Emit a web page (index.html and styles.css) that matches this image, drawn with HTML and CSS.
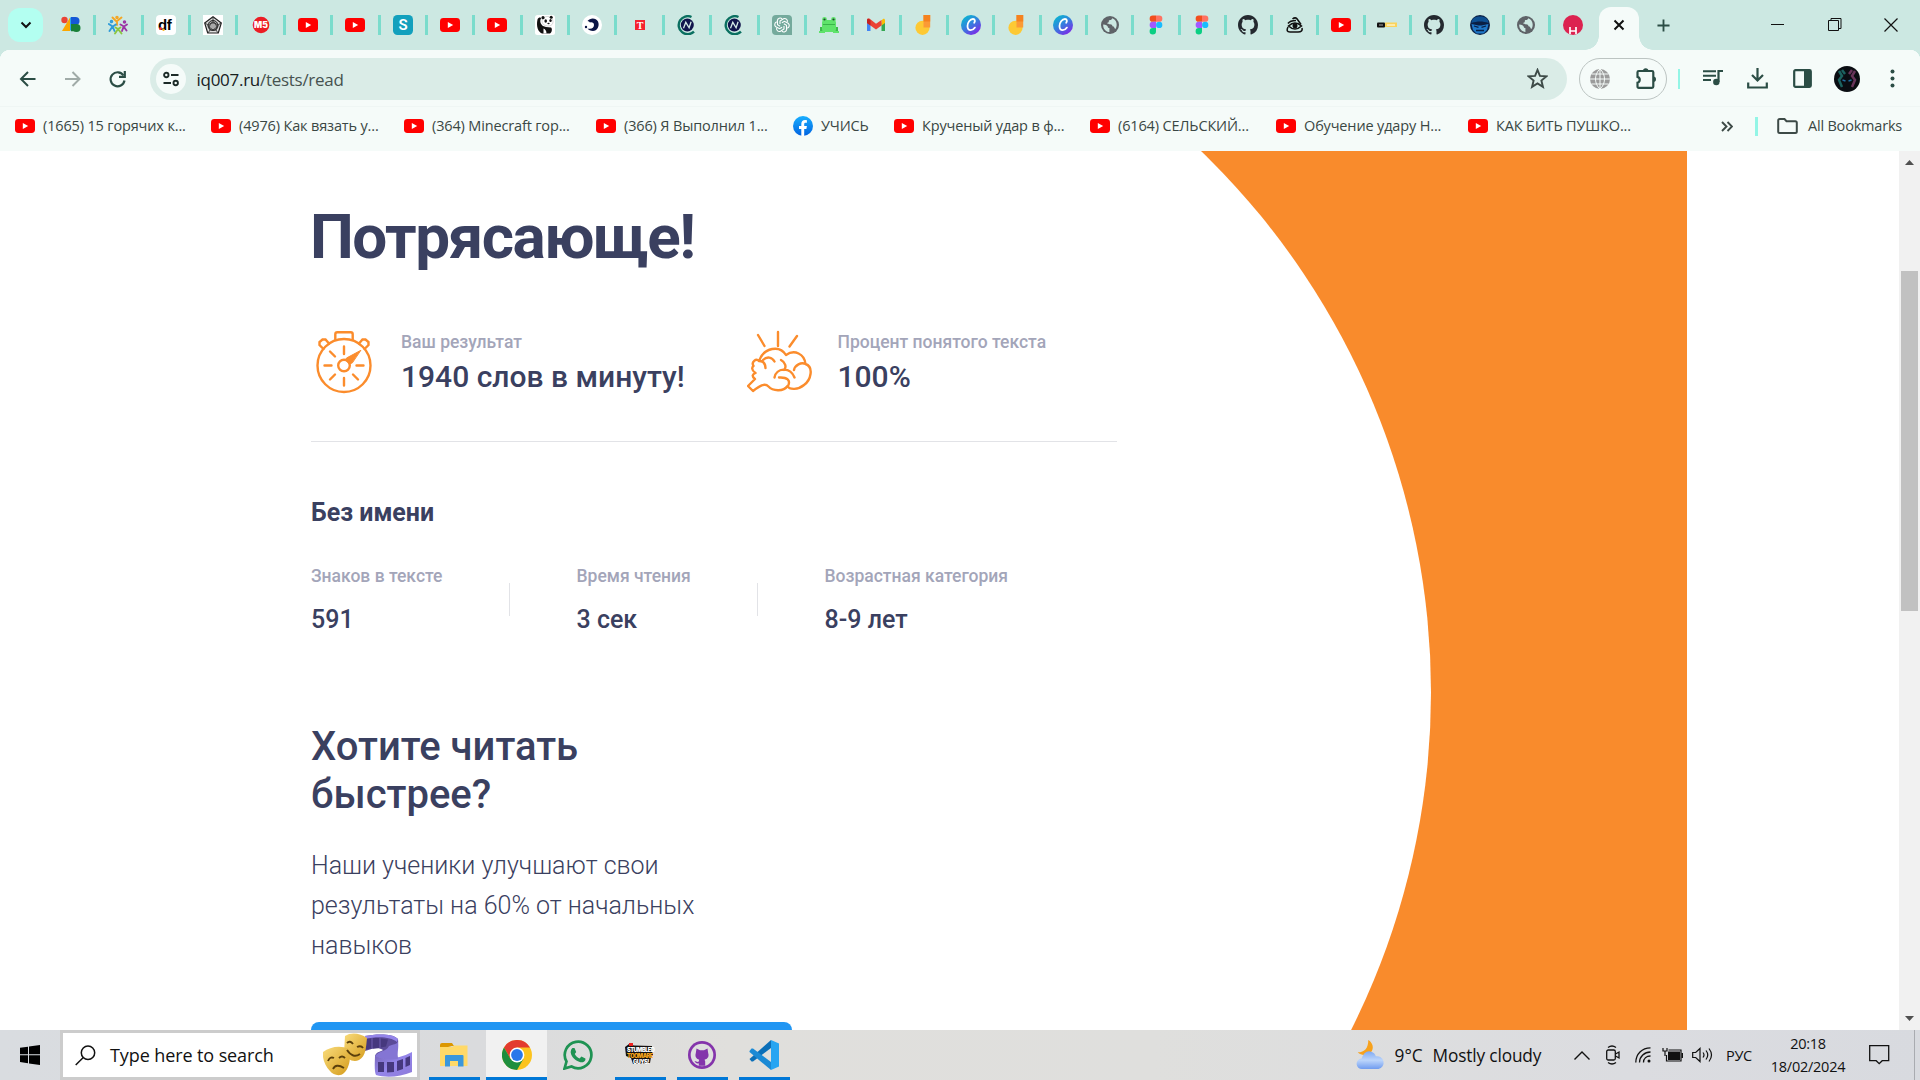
FILE: index.html
```
<!DOCTYPE html>
<html lang="ru">
<head>
<meta charset="utf-8">
<title>iq007.ru/tests/read</title>
<link rel="stylesheet" href="styles.css">
</head>
<body>
<svg class="defs" aria-hidden="true">
  <defs>
    <linearGradient id="canvaG" x1="0" y1="0" x2=".7" y2="1"><stop offset="0" stop-color="#00c4cc"/><stop offset=".5" stop-color="#2f86dd"/><stop offset="1" stop-color="#7d2ae8"/></linearGradient>
    <linearGradient id="gold" x1="0" y1="0" x2="1" y2="1"><stop offset="0" stop-color="#f9dc7c"/><stop offset="1" stop-color="#d59c1c"/></linearGradient>
    <linearGradient id="film" x1="0" y1="0" x2="1" y2="1"><stop offset="0" stop-color="#7463b4"/><stop offset=".5" stop-color="#9485ea"/><stop offset="1" stop-color="#8d7ad8"/></linearGradient>
    <linearGradient id="cloudG" x1="0" y1="0" x2="0" y2="1"><stop offset="0" stop-color="#7fa9f2"/><stop offset=".5" stop-color="#bcd5fb"/><stop offset="1" stop-color="#6f9bef"/></linearGradient>
    <linearGradient id="fbG" x1="0" y1="0" x2="0" y2="1"><stop offset="0" stop-color="#19afff"/><stop offset="1" stop-color="#0062e0"/></linearGradient>
    <symbol id="yt" viewBox="0 0 20 20"><rect y="3" width="20" height="14" rx="3.4" fill="#f00"/><path d="M7.8 7v6l5.400-3z" fill="#fff"/></symbol>
    <symbol id="globe" viewBox="0 0 20 20"><circle cx="10" cy="10" r="9" fill="#5f6368"/><path d="M3.200 9.400c2.700.3 4.300.9 4.600 2.300.2 1 .6 1.300 1.600 1.400v3.900c-3.400-.2-6.600-3.500-6.200-7.600zM12.200 3.300c-.3 1.200-.9 1.700-2.200 1.800-1.100.1-1.300.6-1.200 1.600-.1.900-1 1-1.600 1.100.3 1.300 1.500 1.500 2.600 1.400 1.600-.1 2.600.6 2.700 2 1.300.1 2 .7 1.800 1.900l1.200.9c2.400-3.700 1.200-9.200-3.300-10.700z" fill="#cce8e2"/></symbol>
    <symbol id="figma" viewBox="0 0 20 20"><path d="M6.800.5H10v6.300H6.800a3.150 3.150 0 0 1 0-6.300z" fill="#f24e1e"/><path d="M10 .5h3.200a3.150 3.150 0 0 1 0 6.300H10z" fill="#ff7262"/><path d="M6.800 6.800H10v6.300H6.800a3.150 3.150 0 0 1 0-6.300z" fill="#a259ff"/><circle cx="13.200" cy="9.950" r="3.150" fill="#1abcfe"/><path d="M6.800 13.100H10v3.200a3.200 3.200 0 1 1-3.200-3.200z" fill="#0acf83"/></symbol>
    <symbol id="github" viewBox="0 0 16 16"><path fill="currentColor" d="M8 0C3.580 0 0 3.580 0 8c0 3.540 2.290 6.530 5.470 7.590.4.070.55-.17.55-.38 0-.19-.01-.82-.01-1.490-2.010.37-2.530-.49-2.690-.94-.09-.23-.48-.94-.82-1.130-.28-.15-.68-.52-.01-.53.63-.01 1.080.58 1.230.82.720 1.210 1.870.87 2.330.66.070-.52.28-.87.510-1.070-1.780-.2-3.640-.89-3.640-3.950 0-.87.310-1.590.82-2.150-.08-.2-.36-1.020.08-2.120 0 0 .67-.21 2.200.82.64-.18 1.320-.27 2-.27s1.360.09 2 .27c1.530-1.040 2.200-.82 2.200-.82.44 1.100.16 1.920.08 2.120.51.56.82 1.270.82 2.150 0 3.070-1.870 3.750-3.650 3.950.29.25.54.730.54 1.480 0 1.070-.01 1.930-.01 2.200 0 .21.15.46.55.38A8.010 8.010 0 0 0 16 8c0-4.420-3.580-8-8-8z"/></symbol>
    <symbol id="jam" viewBox="0 0 20 20"><circle cx="8.500" cy="12.800" r="7.100" fill="#fdc934"/><path d="M9.500 0h6.700v12.500H9.500z" fill="#fb9a36"/><path d="M9.500 0h6.700v6.500H9.500z" fill="#f5821f"/></symbol>
    <symbol id="canva" viewBox="0 0 20 20"><circle cx="10" cy="10" r="10" fill="url(#canvaG)"/><path d="M13.200 7.800c1.200-1.700.8-3.800-1.200-3.800-3 0-5.500 3.500-5.500 7 0 2.600 1.300 4.200 3.200 4.200 1.800 0 3.200-1 4.200-2.600" fill="none" stroke="#fff" stroke-width="1.800" stroke-linecap="round"/></symbol>
    <symbol id="cn" viewBox="0 0 20 20"><path d="M14.500 2A9 9 0 1 0 17 16.600" fill="none" stroke="#0a6f60" stroke-width="2.400"/><circle cx="10.300" cy="10" r="6.500" fill="#11144c"/><path d="M6.500 13.300l2.300-6 3.300 5.500 2-6" fill="none" stroke="#d5eae7" stroke-width="1.300"/></symbol>
  </defs>
</svg>
<div class="screen">
  <header class="tabstrip">
    <button class="tab-search"><svg width="12" height="8" viewBox="0 0 12 8"><path d="M1.500 1.500L6 6l4.500-4.500" fill="none" stroke="#111" stroke-width="2"/></svg></button>
    <div class="tabs">
      <div class="tab"><svg viewBox="0 0 20 20"><circle cx="3.500" cy="5" r="3.200" fill="#ea4335"/><path d="M1 16L9 2.500V16z" fill="#fba700"/><path d="M10 2h4.500a4 4 0 0 1 0 8H10z" fill="#1558d6"/><path d="M10 9h4a3.600 3.600 0 0 1 0 7.200h-4z" fill="#188038"/><circle cx="15.500" cy="13" r="4" fill="#188038"/><path d="M10 2v14l-1-1V3z" fill="#2aa3ef"/></svg></div>
      <div class="tab"><svg viewBox="0 0 20 20" fill="none" stroke-width="1.900" stroke-linecap="round"><g stroke="#f5a623"><circle cx="9" cy="2.500" r=".8"/><path d="M4.500 2.500l4 4 5-4M9 7v3"/></g><g stroke="#2f9bd8"><circle cx="3.500" cy="6.500" r=".8"/><path d="M.8 9l4 2.500 3-2M4.500 11.500l-3 4.500M5 12.500l1.500 3.500"/></g><g stroke="#9b35a5"><circle cx="16.500" cy="7" r=".8"/><path d="M12.500 9.500l3.500 2 3-2M15.500 12l-1.500 4M16 12l2.500 3.500"/></g><path d="M7.500 12.500L10 14l2.500-1.500M10 14l-3 4.500M10 14l3.500 4.500" stroke="#8cc63f"/></svg></div>
      <div class="tab"><svg viewBox="0 0 20 20"><rect width="20" height="20" rx="4" fill="#fff"/><text x="2" y="14.500" class="fav-df">df</text><circle cx="4.500" cy="13.500" r="1.500" fill="#e33"/><circle cx="7.500" cy="14.700" r="1.200" fill="#f6b21b"/></svg></div>
      <div class="tab"><svg viewBox="0 0 20 20"><path fill="#fff" d="M0 0h20v20H0z"/><path d="M10 1.800l8.300 6.200-3 10H4.700l-3-10z" fill="#ddd" stroke="#222" stroke-width="1.200"/><circle cx="10" cy="10.500" r="5" fill="#aaa" stroke="#222"/><path d="M10 2v5l5 3 3-2M15 10l-2 5 2 3M13 15H7l-2 3M7 15l-2-5-3-2M5 10l5-3M8 8h4l2 4-4 3-4-3z" fill="none" stroke="#333" stroke-width=".9"/></svg></div>
      <div class="tab"><svg viewBox="0 0 20 20"><circle cx="10" cy="10" r="8.300" fill="#ec1c24"/><text x="10" y="13" class="fav-m5">M5</text></svg></div>
      <div class="tab"><svg><use href="#yt"/></svg></div>
      <div class="tab"><svg><use href="#yt"/></svg></div>
      <div class="tab"><svg viewBox="0 0 20 20"><rect width="20" height="20" rx="4.500" fill="#12a0bd"/><text x="10" y="15.300" class="fav-s">S</text></svg></div>
      <div class="tab"><svg><use href="#yt"/></svg></div>
      <div class="tab"><svg><use href="#yt"/></svg></div>
      <div class="tab"><svg viewBox="0 0 20 20"><rect width="20" height="20" rx="2.500" fill="#fff"/><path d="M2.500 4.500C3.500 2 6 2 6 3.500 4.500 6 5.500 9 8 11l3 1 5 .5c1.500 1 1 5-1 6H7C3 17 1 11 2.500 4.500z" fill="#111"/><path d="M7 6c0-3 3-4.500 5.500-4.500S18 3 18 6.500 15.500 11 12.500 11 7 9 7 6z" fill="#fff" stroke="#999" stroke-width=".4"/><circle cx="8" cy="2.700" r="1.600" fill="#111"/><circle cx="16.200" cy="2.200" r="1.500" fill="#111"/><ellipse cx="10.700" cy="6" rx="1.300" ry="1.700" fill="#111"/><ellipse cx="15.500" cy="5.500" rx="1.200" ry="1.600" fill="#111"/><ellipse cx="13.500" cy="8.500" rx="1.200" ry=".8" fill="#111"/><path d="M8.500 13.500c2 1 3 2.500 3 5h-3z" fill="#fff"/></svg></div>
      <div class="tab"><svg viewBox="0 0 20 20"><circle cx="10" cy="10" r="10" fill="#fff"/><path d="M5.500 6C8 2.500 14 2.500 16 6.500c2 4.500-1 9.500-5 9.500-2.500 0-4.500-1-5.500-2.500 4 1 6.500-.5 6.500-3.500 0-2-1.500-3-4-2.500l-1-1z" fill="#0b1545"/><circle cx="4" cy="12" r="1.200" fill="#0b1545"/></svg></div>
      <div class="tab"><svg viewBox="0 0 20 20"><path fill="#f5232e" d="M5 5h10v10H5z"/><text x="10" y="13.500" class="fav-t">T</text></svg></div>
      <div class="tab"><svg><use href="#cn"/></svg></div>
      <div class="tab"><svg><use href="#cn"/></svg></div>
      <div class="tab"><svg viewBox="0 0 20 20"><path d="M4 0h12a4 4 0 0 1 4 4v16H4a4 4 0 0 1-4-4V4a4 4 0 0 1 4-4z" fill="#74aa9c"/><g fill="none" stroke="#fff" stroke-width="1.100"><path d="M8 9V6l3.500-2.200c2-1 4.500 1 3.800 3.200"/><path d="M8 9V6l3.500-2.200c2-1 4.500 1 3.800 3.200" transform="rotate(60 10 10)"/><path d="M8 9V6l3.500-2.200c2-1 4.500 1 3.800 3.200" transform="rotate(120 10 10)"/><path d="M8 9V6l3.500-2.200c2-1 4.500 1 3.800 3.200" transform="rotate(180 10 10)"/><path d="M8 9V6l3.500-2.200c2-1 4.500 1 3.800 3.200" transform="rotate(240 10 10)"/><path d="M8 9V6l3.500-2.200c2-1 4.500 1 3.800 3.200" transform="rotate(300 10 10)"/></g></svg></div>
      <div class="tab"><svg viewBox="0 0 20 20"><path d="M1 12h4v5H1zM15 12h4v5h-4z" fill="#3dbb4c"/><rect x="3" y="5" width="14" height="12" rx="3" fill="#5fe36b"/><path d="M0 16h6v2H0zM14 16h6v2h-6z" fill="#5fe36b"/><path d="M4 9.500h12" stroke="#38b649"/><circle cx="5.500" cy="4.500" r="2.400" fill="#5fe36b"/><circle cx="14.500" cy="4.500" r="2.400" fill="#5fe36b"/><circle cx="5.500" cy="4.500" r="1.100" fill="#243"/><circle cx="14.500" cy="4.500" r="1.100" fill="#243"/></svg></div>
      <div class="tab"><svg viewBox="0 0 20 20"><path d="M1 5v11h3.500V8z" fill="#4285f4"/><path d="M19 5v11h-3.500V8z" fill="#34a853"/><path d="M15.500 5.500L17 4c1-.7 2 0 2 1.200V8l-3.500 2.600z" fill="#fbbc04"/><path d="M1 8V5.200C1 3.500 3 3.300 4 4l6 4.700L15.500 5v5.500L10 14.500z" fill="#ea4335"/><path d="M1 8V5.200C1 4 2 3.300 3 4l1.500 1.200v5.400z" fill="#c5221f"/></svg></div>
      <div class="tab"><svg><use href="#jam"/></svg></div>
      <div class="tab narrow"><svg><use href="#canva"/></svg></div>
      <div class="tab narrow"><svg><use href="#jam"/></svg></div>
      <div class="tab narrow"><svg><use href="#canva"/></svg></div>
      <div class="tab narrow"><svg><use href="#globe"/></svg></div>
      <div class="tab narrow"><svg><use href="#figma"/></svg></div>
      <div class="tab narrow"><svg><use href="#figma"/></svg></div>
      <div class="tab narrow"><svg class="gh"><use href="#github"/></svg></div>
      <div class="tab narrow"><svg viewBox="0 0 20 20" fill="none" stroke="#111" stroke-width="1.600"><path d="M7.500 4q3-2.500 5 .5l3.500 5M3 8.500Q5 5.500 11 5.500M3 12q-2.500 5 2 5h8q5 0 4-4"/><path d="M3.500 11q6.500-6 13 0-6.500 6-13 0z"/><circle cx="10" cy="10.800" r="1.700" fill="#111"/></svg></div>
      <div class="tab narrow"><svg><use href="#yt"/></svg></div>
      <div class="tab narrow"><svg viewBox="0 0 20 20"><rect y="7.500" width="8" height="5" rx="1" fill="#111"/><rect x="8" y="7.500" width="12" height="4.500" fill="#fbd35b"/><path d="M2 10h4" stroke="#aaa"/><path d="M10 10h8" stroke="#fff2c4" stroke-width="1.500"/></svg></div>
      <div class="tab narrow"><svg class="gh"><use href="#github"/></svg></div>
      <div class="tab narrow"><svg viewBox="0 0 20 20"><circle cx="10" cy="10" r="10" fill="#0a1f44"/><path d="M1.500 8c0-4 3-6.500 8.500-6.500s8.500 2.500 8.500 6.500c-3-1-5.500-1.500-8.500-1.500S4.500 7 1.500 8z" fill="#0d4f91"/><path d="M1.500 9l7 1.500h3l7-1.500-1.500 6-3.500 3.500h-7L3 15z" fill="#1f78c8"/><path d="M4 11l4.500 1.300M16 11l-4.500 1.300M6 15.500h8" stroke="#0a1f44" stroke-width="1.300"/></svg></div>
      <div class="tab narrow"><svg><use href="#globe"/></svg></div>
      <div class="tab narrow last"><svg viewBox="0 0 20 20"><circle cx="10" cy="10" r="10" fill="#dc2350"/><path d="M7 12v7M13 12v7M7 16h6" stroke="#fff" stroke-width="1.700"/></svg></div>
    </div>
    <div class="tab-active"><svg width="12" height="12" viewBox="0 0 12 12"><path d="M1.500 1.500l9 9m0-9l-9 9" stroke="#111" stroke-width="2"/></svg></div>
    <svg class="new-tab" viewBox="0 0 14 14"><path d="M7 .5v13M.5 7h13" stroke="#2b4d45" stroke-width="2"/></svg>
    <div class="window-controls">
      <svg width="14" height="14"><path d="M0 6.500h13" stroke="#111"/></svg>
      <svg width="14" height="14" fill="none" stroke="#111"><path d="M.5 2.500h10v10H.5zM3 2.500V.5h10v10h-2.500"/></svg>
      <svg width="14" height="14"><path d="M.5.5l13 13m0-13l-13 13" stroke="#111" stroke-width="1.200"/></svg>
    </div>
  </header>

  <nav class="toolbar">
    <svg class="nav-icon" viewBox="0 0 20 20" fill="none" stroke="#2b4d45" stroke-width="2"><path d="M17.500 10H4M10 3l-7 7 7 7"/></svg>
    <svg class="nav-icon" viewBox="0 0 20 20" fill="none" stroke="#a0aba8" stroke-width="2"><path d="M2 10h13.500M9.500 3l7 7-7 7"/></svg>
    <svg class="nav-icon" viewBox="0 0 20 20" fill="none" stroke="#2b4d45" stroke-width="2.200"><path d="M15.500 6.500A7 7 0 1 0 16.500 11.500"/><path d="M16.800 2v5.800H11"/></svg>
    <div class="omnibox">
      <span class="site-info"><svg width="16" height="16" viewBox="0 0 16 16" fill="none" stroke="#1c2b28" stroke-width="1.900"><circle cx="3.300" cy="4" r="2.200"/><path d="M8 4h7.500M.5 12H8"/><circle cx="12.700" cy="12" r="2.200"/></svg></span>
      <span class="url"><b>iq007.ru</b>/tests/read</span>
      <svg class="star" viewBox="0 0 20 20"><path d="M10 1.800l2.300 5.700 6.100.5-4.700 4 1.500 6L10 14.700 4.800 18l1.500-6-4.700-4 6.100-.5z" fill="none" stroke="#3d4a47" stroke-width="1.800"/></svg>
    </div>
    <div class="ext-pill">
      <svg viewBox="0 0 20 20"><circle cx="10" cy="10" r="10" fill="#9b9b9b"/><path d="M0 10h20M1.500 5h17M1.500 15h17M10 0v20M10 0C4 5 4 15 10 20M10 0c6 5 6 15 0 20" fill="none" stroke="#f5fbf9"/></svg>
      <svg class="puzzle" viewBox="0 0 22 22"><path d="M2.500 5.300Q2.500 4 3.800 4H17q1.300 0 1.300 1.300v14.200q0 1.300-1.300 1.300H3.800q-1.300 0-1.300-1.300v-3.800a3 3 0 0 0 0-5.800z" fill="none" stroke="#2b4d45" stroke-width="2.200"/><path d="M8 4a2.700 2.700 0 0 1 5.400 0zM18.300 9.500a2.700 2.700 0 0 1 0 5.400z" fill="#2b4d45"/></svg>
    </div>
    <i class="bar-sep"></i>
    <svg class="media" viewBox="0 0 20 18"><path d="M0 2.200h13M0 6.700h13M0 11h8" stroke="#2b4d45" stroke-width="2"/><path d="M15.500 13V2H20" fill="none" stroke="#2b4d45" stroke-width="2.200"/><circle cx="13.300" cy="13" r="3.200" fill="#2b4d45"/></svg>
    <svg class="download" viewBox="0 0 21 21"><path d="M10.500 0v12M5 7l5.500 5.500L16 7M1.200 14.500v5h18.600v-5" fill="none" stroke="#2b4d45" stroke-width="2.200"/></svg>
    <svg class="panel" viewBox="0 0 19 19"><rect x="1.200" y="1.200" width="16.600" height="16.600" rx="1.300" fill="none" stroke="#2b4d45" stroke-width="2.200"/><path d="M11 1h7v17h-7z" fill="#2b4d45"/></svg>
    <svg class="avatar" viewBox="0 0 26 26"><circle cx="13" cy="13" r="13" fill="#0a0d12"/><path d="M5 5l3 5-3 4 3 7M8 4l3 4" stroke="#1b625f" stroke-width="2.500" fill="none"/><path d="M21 5l-3 5 3 4-3 7M18 4l-3 4" stroke="#68345a" stroke-width="2.500" fill="none"/><path d="M8.500 14l3 1M17.500 14l-3 1" stroke="#216ea0" stroke-width="1.500"/></svg>
    <svg class="dots" viewBox="0 0 5 19" fill="#2b4d45"><circle cx="2.500" cy="2.500" r="2"/><circle cx="2.500" cy="9.500" r="2"/><circle cx="2.500" cy="16.500" r="2"/></svg>
  </nav>

  <nav class="bookmarks">
    <a class="bm w1"><svg><use href="#yt"/></svg><span>(1665) 15 горячих к...</span></a>
    <a class="bm w2"><svg><use href="#yt"/></svg><span>(4976) Как вязать у...</span></a>
    <a class="bm w3"><svg><use href="#yt"/></svg><span>(364) Minecraft гор...</span></a>
    <a class="bm w4"><svg><use href="#yt"/></svg><span>(366) Я Выполнил 1...</span></a>
    <a class="bm w5"><svg viewBox="0 0 20 20"><circle cx="10" cy="10" r="10" fill="url(#fbG)"/><path d="M8.300 20v-7H6v-2.900h2.300V8c0-2.600 1.500-3.900 3.700-3.900.8 0 1.600.1 1.900.2v2.500h-1.300c-1.100 0-1.400.6-1.400 1.400v1.900h2.700l-.5 2.900h-2.200v7z" fill="#fff"/></svg><span>УЧИСЬ</span></a>
    <a class="bm w6"><svg><use href="#yt"/></svg><span>Крученый удар в ф...</span></a>
    <a class="bm w7"><svg><use href="#yt"/></svg><span>(6164) СЕЛЬСКИЙ...</span></a>
    <a class="bm w8"><svg><use href="#yt"/></svg><span>Обучение удару Н...</span></a>
    <a class="bm w9"><svg><use href="#yt"/></svg><span>КАК БИТЬ ПУШКО...</span></a>
    <svg class="more" viewBox="0 0 12 11"><path d="M1 1l4.500 4.500L1 10M6.500 1L11 5.500 6.500 10" fill="none" stroke="#3d4a47" stroke-width="1.900"/></svg>
    <i class="bar-sep wide"></i>
    <a class="all"><svg viewBox="0 0 21 16"><path d="M1.200 2.500Q1.200 1 2.700 1h4.800l2 2.200h8.800q1.500 0 1.500 1.500v8.800q0 1.500-1.500 1.500H2.700q-1.500 0-1.500-1.500z" fill="none" stroke="#3d4a47" stroke-width="2"/></svg><span>All Bookmarks</span></a>
  </nav>

  <main class="page">
    <svg class="backdrop" viewBox="0 0 700 879"><path d="M0 0h700v879H0z" fill="#f98b2c"/><circle cx="-308.500" cy="541.500" r="752.500" fill="#fff"/></svg>
    <section class="result">
      <h1>Потрясающе!</h1>
      <div class="stats">
        <div class="stat">
          <svg class="watch" viewBox="0 0 62 64" fill="none" stroke="#fb8c2c" stroke-width="2.400" stroke-linecap="round"><circle cx="33" cy="35.500" r="26.500"/><path d="M24.300 9.500V4.200q0-2 2-2H39.700q2 0 2 2v5.300M12.500 19l-4-4 0-3 3-2.500 3 0 3.500 4M53.500 19l4-4 0-3-3-2.500-3 0-3.500 4M33 16.500v7.500M33 48v7.500M13.500 35.500h7M45.500 35.500h7M19 21.500l5 5M24 44.500l-5 5M42 44.500l5 5"/><circle cx="33" cy="35.500" r="5.800"/><path d="M49.500 20.500l-14 7.500-1 2 4 4 2.500-1z" fill="#fb8c2c" stroke-width="1"/></svg>
          <div><p class="label">Ваш результат</p><p class="big">1940 слов в минуту!</p></div>
        </div>
        <div class="stat">
          <svg class="brain" viewBox="0 0 66 64" fill="none" stroke="#fb8c2c" stroke-width="2.400" stroke-linecap="round" stroke-linejoin="round"><path d="M11 5l6.500 11M31 2v14M50 6L42.500 16.500M12 31C17 17 33 15 39 25 47.500 19 57.500 24 58.500 34 67 37 64 50 57 55 51 60 42.500 60 40.500 56 36.500 62 25.500 61 21.500 56.500 18 53 14 55 6 61L1 56 8 49C4 46 6 44 8.500 43 4 40 5 37 6.500 36 4 32 9 28 12 31 17 31 18.500 34 18.500 38M16 30C20 26 25 27 27.500 31.500M34 30C38 32 40 37 37 40M27.500 47.500C29 38 43 36 47.500 47.500M32 47.500C40 47 44 50 41 56M47 40C48 35 54 32 58.500 34"/></svg>
          <div><p class="label">Процент понятого текста</p><p class="big">100%</p></div>
        </div>
      </div>
      <h2>Без имени</h2>
      <div class="facts">
        <div class="fact f1"><p class="label">Знаков в тексте</p><p class="value">591</p></div>
        <div class="fact f2"><p class="label">Время чтения</p><p class="value">3 сек</p></div>
        <div class="fact"><p class="label">Возрастная категория</p><p class="value">8-9 лет</p></div>
      </div>
      <h3>Хотите читать<br>быстрее?</h3>
      <p class="lead">Наши ученики улучшают свои<br>результаты на 60% от начальных<br>навыков</p>
      <div class="cta"></div>
    </section>
    <div class="scrollbar">
      <svg viewBox="0 0 9 5"><path d="M4.500 0L9 5H0z" fill="#505050"/></svg>
      <i class="thumb"></i>
      <svg viewBox="0 0 9 5"><path d="M4.500 5L9 0H0z" fill="#505050"/></svg>
    </div>
  </main>

  <footer class="taskbar">
    <div class="start"><svg width="20" height="20" viewBox="0 0 20 20"><path d="M0 2.800L8 1.700V9.300H0zM9 1.500L20 0v9.300H9zM0 10.300h8v7.900L0 17.100zM9 10.300h11V20L9 18.400z"/></svg></div>
    <div class="search">
      <svg width="21" height="21" viewBox="0 0 21 21" fill="none" stroke="#111" stroke-width="1.500"><circle cx="13" cy="7.700" r="6.700"/><path d="M8.300 12.500L.7 20"/></svg>
      <span>Type here to search</span>
      <svg class="masks" viewBox="0 0 90 44"><path d="M42 3C52 1 70 0 75 6c1 6-3 12 0 20-5 2-18-1-23-3 1-4 5-4 8-6-4-3-10-2-18 1z" fill="#5b4b98"/><path d="M52 22c6 5 22 5 37-3v20c-12 5-26 6-36 3-2-4-1-14-1-20z" fill="url(#film)"/><path d="M42 3C52 1 70 0 75 6l-1 3C68 4 55 3 42 6z" fill="#9485ea"/><path d="M66 13c4-2 8-1 9-5 1 7-1 11 0 18-9 1-18 0-23-3 5-6 11-4 14-10z" fill="#8475d4"/><path d="M43 6l5-.5v10l-5 1zM50 5h6v10l-6 .5zM58 5.500l7 1-2 7-5 1zM55 29h6v10h-6zM64 29h7v10l-7 .5zM74 28l6-2v10l-6 2zM82.500 25l4.500-2v9l-4.500 2z" fill="#46387e"/><path d="M22 3c6-4 15-3 22 2-1 9-1 18-8 22-6 3-12-1-15-7z" fill="url(#gold)"/><path d="M0 19c7-5 17-7 26-3 2 8 1 18-5 24-4 4-11 2-14-2-5-5-8-13-7-19z" fill="url(#gold)"/><path d="M24 10q3-3 6 1M34 14q4-2 6 1M24 17q6 9 13 4M5 28q2-5 6-3M16 25q3-3 6 0M10 36q3-6 11-1" fill="none" stroke="#5b400c" stroke-width="1.900"/></svg>
    </div>
    <div class="apps">
      <div class="app run"><svg width="28" height="24" viewBox="0 0 28 24"><path d="M0 2q0-2 2-2h10l2 3h-2L0 6z" fill="#dc9700"/><path d="M0 4h12l2-1.500h13.500V23H0z" fill="#ffd968"/><path d="M5.500 12h17q1 0 1 1v10.500H18V18h-8v5.500H5V13z" fill="#3a97dc"/></svg></div>
      <div class="app run current"><svg width="30" height="30" viewBox="0 0 30 30"><circle cx="15" cy="15" r="15" fill="#fcc31e"/><path d="M2 7.500A15 15 0 0 1 28 7.500H15L8.500 19z" fill="#e33b2e"/><path d="M2 7.500A15 15 0 0 0 15 30l6.500-11.300L8.500 19z" fill="#1e8e3e"/><circle cx="15" cy="15" r="7.400" fill="#fff"/><circle cx="15" cy="15" r="5.900" fill="#2a78ea"/></svg></div>
      <div class="app"><svg width="30" height="30" viewBox="0 0 30 30"><path d="M1.500 28.500l2-7A13.300 13.300 0 1 1 8.500 26.500z" fill="none" stroke="#1f9353" stroke-width="2.700"/><path d="M9.500 8h2l1.700 4-1.400 2c1 2.200 2.800 3.600 4.800 4.500l1.800-2 4 2v1.500c-.8 2-3 2.700-5 2.200-5-1.200-9-5.300-9.700-9.700-.1-1.800.7-3.800 1.800-4.500z" fill="#1f9353"/></svg></div>
      <div class="app run"><svg class="stumble" width="36" height="34" viewBox="-3 -10 36 34"><path d="M0 2l4-3 5 1.500 18 .5v5l1 4-2 2-1 6-17 1-2-6-5-2z" fill="#151010"/><text x="2" y="7" class="game white">STUMBLED</text><text x="2" y="12.800" class="game gold">TOOMARE</text><text x="8" y="18.500" class="game white">GUYS!</text><path d="M4-2h4v3H4z" fill="#e22"/></svg></div>
      <div class="app run"><svg width="28" height="28" viewBox="0 0 28 28"><circle cx="14" cy="14" r="14" fill="#8434ab"/><circle cx="14" cy="14" r="11.300" fill="#dfdfdf"/><path d="M8.500 7.500l3.500 1.700h4l3.500-1.700.6 4q2 6-3.600 7.300l.7 1.500v4.500h-6.400v-2.500c-2.300.6-3.300-.4-4.300-2.300 2 0 2.300 1.600 4.300.6l.4-1.800q-5.200-1.300-3.300-7.300z" fill="#8434ab"/></svg></div>
      <div class="app run"><svg width="30" height="30" viewBox="0 0 30 30"><path d="M22 0v8L4 21.500 2.500 21.500.5 19z" fill="#0b6fb8"/><path d="M.5 11l2-2.500H4L22 22v8L.5 12z" fill="#1b8ad5"/><path d="M22 0l8 3.500v23L22 30z" fill="#27a5f2"/></svg></div>
    </div>
    <div class="tray">
      <svg class="weather" width="31" height="30" viewBox="0 0 31 34"><path d="M13 0c5 3 7 9 3 14-4 4-11 4-15 0 8 0 12-5 12-14z" fill="#f7a11c"/><path d="M6 33a6 6 0 0 1-.5-12C7 16 11 12 15 13c4 .6 6 3 6.500 5.500A7 7 0 0 1 24.500 33z" fill="url(#cloudG)"/></svg>
      <span class="temp">9°C</span><span class="cond">Mostly cloudy</span>
      <svg class="chev" width="16" height="9"><path d="M.5 8.500L8 1l7.500 7.500" fill="none" stroke="#111" stroke-width="1.400"/></svg>
      <svg class="cam" width="16" height="20" viewBox="0 0 16 20" fill="none" stroke="#111" stroke-width="1.300"><rect x="1.700" y="5" width="8.600" height="10" rx="1.500"/><path d="M10.500 9l3.500-2v6l-3.500-2M3 2.500q4-3 8 0M3 17.500q4 3 8 0"/></svg>
      <svg class="wifi" width="16" height="16" viewBox="0 0 16 16" fill="none" stroke="#111" stroke-width="1.300"><path d="M.8 15.500C.8 7 7 .8 15.500.8M4.500 15.500c0-6 5-10.500 11-10.500M8.500 15.500c0-4 3-6.500 7-6.500"/><circle cx="14" cy="14" r="1.500" fill="#111" stroke="none"/></svg>
      <svg class="bat" width="21" height="14" viewBox="0 0 21 14"><path d="M6 3.500h12v8.500H6z" fill="#111"/><path d="M6.500 2H19v11H4.500V7M20.400 5v5M1 0v3h4V0M3 3v5" fill="none" stroke="#111" stroke-width="1.200"/></svg>
      <svg class="vol" width="21" height="16" viewBox="0 0 21 16" fill="none" stroke="#111" stroke-width="1.200"><path d="M.7 5.500h3L8 1.500v13L3.700 10.500h-3zM11 5.500q2 2.500 0 5M14 3.500q3.500 4.500 0 9M17 1.500q5 6.500 0 13"/></svg>
      <span class="lang">РУС</span>
      <div class="clock"><span>20:18</span><span>18/02/2024</span></div>
      <svg class="note" width="21" height="20"><path d="M.7.700h19v15h-6.500l-3 3-3-3H.7z" fill="none" stroke="#111" stroke-width="1.300"/></svg>
      <i class="peek"></i>
    </div>
  </footer>
</div>
</body>
</html>
```
FILE: styles.css
```
* { box-sizing: border-box; margin: 0; padding: 0; }
body { width: 1920px; height: 1080px; overflow: hidden; font-family: "Open Sans", "Noto Sans", sans-serif; background: #fff; }
svg { display: block; flex: none; }
.defs { position: absolute; width: 0; height: 0; }
.screen { display: flex; flex-direction: column; width: 1920px; height: 1080px; }

/* Tab strip */
.tabstrip { display: flex; height: 50px; flex: none; background: #cce8e2; }
.tab-search { display: flex; align-items: center; justify-content: center; width: 35px; height: 34px; margin: 8px 0 0 8px; border: 0; border-radius: 12px; background: #b3fff1; }
.tabs { display: flex; align-items: center; height: 50px; margin-left: 5.900px; }
.tab { display: flex; align-items: center; justify-content: center; width: 47.390px; height: 20px; border-right: 3px solid #7adccc; }
.tab.narrow { width: 46.300px; }
.tab.last { border: 0; width: 45px; }
.tab svg { width: 20px; height: 20px; }
.tab .gh { color: #24292f; }
.fav-df { font: bold 15px "Liberation Sans", sans-serif; letter-spacing: -.5px; }
.fav-m5 { font: 900 8.500px Inter, sans-serif; fill: #fff; text-anchor: middle; }
.fav-s { font: 600 15px Roboto, sans-serif; fill: #fff; text-anchor: middle; }
.fav-t { font: bold 10px "Liberation Serif", serif; fill: #fff; text-anchor: middle; }
.tab-active { position: relative; display: flex; align-items: center; justify-content: center; width: 40px; height: 43px; margin: 7px 0 0 3px; padding-bottom: 7px; border-radius: 12px 12px 0 0; background: #f5fbf9; }
.tab-active::before, .tab-active::after { content: ""; position: absolute; bottom: 0; width: 14px; height: 14px; }
.tab-active::before { right: 100%; background: radial-gradient(circle at 0 0, transparent 13.500px, #f5fbf9 14px); }
.tab-active::after { left: 100%; background: radial-gradient(circle at 100% 0, transparent 13.500px, #f5fbf9 14px); }
.new-tab { width: 13px; height: 13px; margin: 19px 0 0 18px; }
.window-controls { display: flex; gap: 42.500px; margin: 18px 22px 0 auto; }

/* Toolbar */
.toolbar { display: flex; align-items: center; height: 57px; flex: none; padding: 1px 0 0 18px; background: radial-gradient(circle at 10px 10px, #f5fbf9 10px, #cce8e2 10.500px) 0 0 / 10px 10px no-repeat, radial-gradient(circle at 0 10px, #f5fbf9 10px, #cce8e2 10.500px) 100% 0 / 10px 10px no-repeat, #f5fbf9; border-bottom: 1px solid #eff6f4; }
.nav-icon { width: 20px; height: 20px; margin-right: 25px; }
.omnibox { display: flex; align-items: center; width: 1417px; height: 42px; margin-left: -3px; padding-left: 6px; border-radius: 21px; background: #daece7; }
.site-info { display: flex; align-items: center; justify-content: center; width: 30px; height: 30px; border-radius: 50%; background: #f5fbf9; }
.url { margin: 1px 0 0 10.500px; font-size: 17px; color: #46524f; letter-spacing: -.28px; }
.url b { font-weight: 400; color: #16201e; }
.star { width: 21px; height: 21px; margin: 0 19px 0 auto; }
.ext-pill { display: flex; align-items: center; gap: 25px; width: 88px; height: 42px; margin-left: 12px; padding-left: 10px; border: 1px solid #bcc4c2; border-radius: 21px; }
.ext-pill svg { width: 20px; height: 20px; }
.ext-pill .puzzle { width: 22px; height: 22px; margin-top: -2px; }
.bar-sep { width: 2px; height: 20px; margin-left: 11px; background: #93f5e6; }
.media { width: 20px; height: 18px; margin: -2px 0 0 23px; }
.download { width: 21px; height: 21px; margin-left: 24px; }
.panel { width: 19px; height: 19px; margin-left: 25px; }
.avatar { width: 26px; height: 26px; margin-left: 22px; }
.dots { width: 5px; height: 19px; margin-left: 30px; }

/* Bookmarks */
.bookmarks { display: flex; align-items: center; height: 44px; flex: none; padding: 0 0 6px 15px; background: #f5fbf9; color: #3a4744; font-size: 14.500px; letter-spacing: -.15px; }
.bm { display: flex; align-items: center; gap: 8px; white-space: nowrap; }
.bm svg { width: 20px; height: 20px; }
.bm span, .all span { margin-top: -2px; }
.w1, .w6 { width: 196px; }
.w2 { width: 193px; }
.w3, .w8 { width: 192px; }
.w4 { width: 197px; }
.w5 { width: 101px; }
.w7 { width: 186px; }
.w9 { width: 163px; }
.more { width: 12px; height: 11px; margin: 0 0 0 auto; }
.bar-sep.wide { width: 3px; height: 19px; margin-left: 22px; }
.all { display: flex; align-items: center; gap: 10px; width: 143px; margin-left: 19px; white-space: nowrap; letter-spacing: -.2px; }
.all svg { width: 21px; height: 16px; }

/* Page */
.page { position: relative; display: flex; justify-content: space-between; height: 879px; flex: none; overflow: hidden; background: #fff; font-family: Roboto, sans-serif; color: #3a4060; }
.backdrop { position: absolute; left: 987px; top: 0; width: 700px; height: 879px; }
.result { position: relative; width: 1117px; padding: 48px 0 0 311px; }
h1 { margin-left: -1px; font-size: 62px; line-height: 75px; font-weight: 700; letter-spacing: -1.500px; }
.stats { display: flex; height: 112px; margin-top: 55.500px; border-bottom: 1px solid #e2e3e7; }
.stat { display: flex; }
.stat:first-child { width: 436px; }
.watch { width: 62px; height: 64px; margin-right: 28px; }
.brain { width: 66px; height: 64px; margin-right: 24.500px; }
.label { font-size: 17.500px; line-height: 25px; font-weight: 500; color: #a3a5b9; white-space: nowrap; }
.big { margin-top: 2px; font-size: 30px; line-height: 40px; font-weight: 500; white-space: nowrap; }
h2 { margin-top: 56px; font-size: 25px; line-height: 30px; font-weight: 700; }
.facts { display: flex; margin-top: 36px; }
.fact { position: relative; }
.f1 { width: 265.500px; }
.f2 { width: 248px; }
.f1::after, .f2::after { content: ""; position: absolute; right: 66.500px; top: 19px; width: 1px; height: 33px; background: #e2e3e7; }
.value { margin-top: 16px; font-size: 25px; line-height: 30px; font-weight: 500; }
h3 { margin-top: 88px; font-size: 40px; line-height: 48px; font-weight: 500; }
.lead { margin-top: 27px; font-size: 25px; line-height: 40px; font-weight: 300; }
.cta { width: 481px; height: 60px; margin-top: 56px; border-radius: 8px; background: #2196f3; }
.scrollbar { position: relative; display: flex; flex-direction: column; align-items: center; width: 21px; height: 879px; padding: 9px 0 9px; background: #f1f1f1; }
.scrollbar svg { width: 9px; height: 5px; }
.thumb { width: 17px; height: 340px; margin: 106px 0 auto; background: #c1c1c1; }

/* Taskbar */
.taskbar { display: flex; align-items: stretch; height: 50px; flex: none; background: linear-gradient(90deg, #d9dce0 0, #dadbdd 25%, #e0dfdc 38%, #dfdfdd 60%, #dbdce0 85%, #d8dadf 100%); color: #111; }
.start { display: flex; align-items: center; width: 60px; padding-left: 20px; }
.search { display: flex; align-items: center; width: 360px; padding-left: 12px; border: 3px solid #ccc; background: #fff; font-size: 18px; }
.search span { width: 213px; margin-left: 14px; white-space: nowrap; letter-spacing: -.1px; }
.masks { width: 90px; height: 44px; }
.apps { display: flex; margin-left: 4px; }
.app { display: flex; align-items: center; justify-content: center; width: 62px; }
.app svg { margin-left: -2px; }
.app.run { background: linear-gradient(#0078d7, #0078d7) 5px bottom / 51px 3px no-repeat; }
.app.current { background: linear-gradient(#0078d7, #0078d7) left bottom / 61px 3px no-repeat, linear-gradient(#f1f1f1, #f1f1f1) left top / 61px 50px no-repeat; }
.app.current svg { margin-left: -1px; }
.app .stumble { margin-top: -6px; }
.game { font: 900 5.600px Inter, sans-serif; letter-spacing: -.5px; }
.white { fill: #fff; }
.gold { fill: #f8a51b; }
.tray { display: flex; align-items: center; margin-left: auto; font-size: 17.300px; }
.tray span { white-space: nowrap; }
.temp { width: 38px; margin-left: 9px; }
.cond { width: 141.500px; letter-spacing: -.15px; }
.cam { margin-left: 15px; }
.wifi { margin-left: 14px; }
.bat { margin-left: 11px; }
.vol { margin-left: 9px; }
.tray .lang { width: 28px; margin-left: 13px; font-size: 14.500px; letter-spacing: -.3px; }
.clock { display: flex; flex-direction: column; align-items: center; width: 80px; margin-left: 14px; font-size: 14.500px; line-height: 23px; letter-spacing: -.25px; }
.note { margin: 0 0 0 21px; }
.peek { width: 1px; height: 50px; margin: 0 5px 0 24px; background: #a9abb0; }
```
